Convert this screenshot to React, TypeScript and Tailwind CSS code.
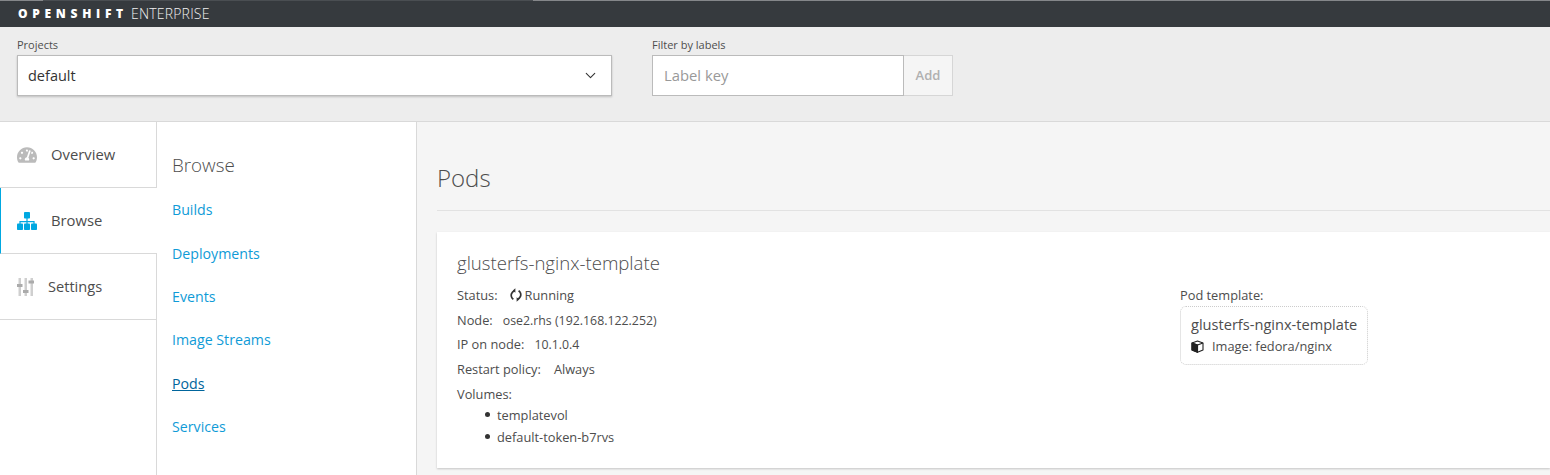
import React from 'react';
import { FaTachometerAlt } from 'react-icons/fa';
import { ChevronDown } from 'lucide-react';

const browseLinks = ['Builds', 'Deployments', 'Events', 'Image Streams', 'Pods', 'Services'];

const SitemapIcon = () => (
    <svg viewBox="0 0 20 18" className="w-[20px] h-[18px] text-[#00a8e1]" fill="currentColor">
        <rect x="7" y="0" width="6" height="6.5" rx="0.8" />
        <path d="M9.4 6h1.2v3H17.6v3.5h-1.2V10.2H10.6v2.3H9.4V10.2H3.6v2.3H2.4V9H9.4z" />
        <rect x="0" y="11.5" width="6" height="6.5" rx="0.8" />
        <rect x="7" y="11.5" width="6" height="6.5" rx="0.8" />
        <rect x="14" y="11.5" width="6" height="6.5" rx="0.8" />
    </svg>
);

const SlidersIcon = () => (
    <svg viewBox="0 0 17 18" className="w-[17px] h-[18px]">
        <g fill="#cfcfcf">
            <rect x="1.5" y="0" width="2.5" height="18" />
            <rect x="7.5" y="0" width="2.5" height="18" />
            <rect x="13.5" y="0" width="2.5" height="18" />
        </g>
        <g fill="#ababab">
            <rect x="0" y="6" width="5.5" height="3" />
            <rect x="6" y="12" width="5.5" height="3" />
            <rect x="11.5" y="2.5" width="5.5" height="3" />
        </g>
    </svg>
);

const SpinnerIcon = () => (
    <svg viewBox="0 0 12 14" className="ml-[12px] mr-[3px] w-[12px] h-[14px] text-[#333]" fill="none" stroke="currentColor">
        <path d="M4.6 2.6C1.6 3.8 .4 7 1.8 9.6c.4.8 1 1.3 1.6 1.7" strokeWidth="1.7" />
        <path d="M7.4 11.4c3-1.2 4.2-4.4 2.8-7-.4-.8-1-1.3-1.6-1.7" strokeWidth="1.7" />
        <path d="M5.4 .2v4.6L2.8 2.6z" fill="currentColor" stroke="none" />
        <path d="M6.6 13.8V9.2l2.6 2.2z" fill="currentColor" stroke="none" />
    </svg>
);

const CubeIcon = () => (
    <svg viewBox="0 0 13 13" className="w-[13px] h-[13px] text-[#222]" fill="none" stroke="currentColor" strokeWidth="1.1" strokeLinejoin="round">
        <path d="M6.5 1L12 3v7l-5.5 2.3L1 10V3z" />
        <path d="M1 3l5.5 2L12 3M6.5 5v7.3" />
        <path d="M1 3l5.5 2v7.3L1 10z" fill="currentColor" />
    </svg>
);

const App: React.FC = () => {
    return (
        <div className="w-[1550px] h-[475px] overflow-hidden flex flex-col bg-[#f5f5f5] text-[#363636] font-['Open_Sans',sans-serif]">
            {/* top bar, with the thin loading strip along its upper edge */}
            <header className="h-[27px] shrink-0 flex flex-col bg-[#363a3e]">
                <div className="h-px flex">
                    <div className="w-[43px] bg-[#85878a]" />
                    <div className="w-[490px] bg-[#4a4e52]" />
                    <div className="flex-1 bg-[#85878a]" />
                </div>
                <div className="flex-1 flex items-center pl-[18px]">
                    <span className="w-[113px] text-[12px] font-extrabold tracking-[4.7px] text-white leading-none">OPENSHIFT</span>
                    <span className="text-[14px] font-light text-[#f0f0f0] leading-none tracking-[0.2px]">ENTERPRISE</span>
                </div>
            </header>

            {/* project and label filters */}
            <div className="h-[95px] shrink-0 flex bg-[#ededed] border-b border-[#d9d9d9] pl-[17px] pt-[10px]">
                <div className="w-[595px]">
                    <label className="block text-[11px] leading-[16px] text-[#4d4d4d] mb-[2px]">Projects</label>
                    <div className="h-[41px] flex items-center justify-between pl-[10px] pr-[12px] bg-white border border-[#bbb] shadow-[0_1px_2px_rgba(0,0,0,0.2)]">
                        <span className="text-[14.5px] text-[#333]">default</span>
                        <ChevronDown className="w-[17px] h-[17px] text-[#333]" strokeWidth={1.5} />
                    </div>
                </div>
                <div className="ml-[40px] w-[301px]">
                    <label className="block text-[11px] leading-[16px] text-[#4d4d4d] mb-[2px]">Filter by labels</label>
                    <div className="flex h-[41px]">
                        <div className="w-[252px] flex items-center pl-[11px] bg-white border border-[#bbb] text-[14.8px] text-[#999]">Label key</div>
                        <div className="w-[49px] flex items-center justify-center bg-[#f5f5f5] border border-l-0 border-[#d6d6d6] text-[13px] font-semibold text-[#b0b0b0]">Add</div>
                    </div>
                </div>
            </div>

            <div className="flex-1 flex min-h-0">
                {/* primary nav */}
                <nav className="w-[157px] shrink-0 bg-white flex flex-col text-[14.8px] text-[#4d4d4d]">
                    <div className="h-[66px] flex items-center pl-[17px] border-r border-b border-[#d9d9d9]">
                        <FaTachometerAlt className="w-[20px] h-[20px] text-[#bbb]" />
                        <span className="ml-[14px]">Overview</span>
                    </div>
                    <div className="h-[66px] flex items-center pl-[16px] border-l border-[#00a8e1] border-b border-b-[#d9d9d9]">
                        <SitemapIcon />
                        <span className="ml-[14px]">Browse</span>
                    </div>
                    <div className="h-[66px] flex items-center pl-[17px] border-r border-b border-[#d9d9d9]">
                        <SlidersIcon />
                        <span className="ml-[14px] text-[14.6px]">Settings</span>
                    </div>
                    <div className="flex-1 border-r border-[#d9d9d9]" />
                </nav>

                {/* secondary nav */}
                <nav className="w-[260px] shrink-0 bg-white border-r border-[#d9d9d9] pl-[15px] pt-[31px]">
                    <h2 className="text-[18.8px] font-light leading-[24px] text-[#4d4d4d] mb-[23.2px]">Browse</h2>
                    <ul className="flex flex-col gap-[23.4px] text-[14.2px] leading-[20px] text-[#0f9bd7]">
                        {browseLinks.map((link) => (
                            <li key={link} className={link === 'Pods' ? 'text-[#00659c] underline' : ''}>{link}</li>
                        ))}
                    </ul>
                </nav>

                {/* main content */}
                <main className="flex-1 min-w-0 pl-[20px] pt-[39px]">
                    <h1 className="text-[24px] font-light leading-[34px] text-[#4d4d4d] pb-[15px] border-b border-[#e2e2e2]">Pods</h1>
                    <section className="mt-[21px] h-[236px] flex bg-white shadow-[0_1px_2px_rgba(0,0,0,0.2)] pl-[20px] pt-[19px] text-[12.8px] text-[#4d4d4d]">
                        <div className="w-[723px]">
                            <h3 className="text-[18.6px] font-light leading-[24px] mb-[11px]">glusterfs-nginx-template</h3>
                            <div className="flex flex-col gap-[6.7px]">
                                <div className="flex items-center h-[18px] leading-[18px]">
                                    <span>Status:</span>
                                    <SpinnerIcon />
                                    <span>Running</span>
                                </div>
                                <div className="h-[18px] leading-[18px]">Node:<span className="ml-[10px] text-[12.35px]">ose2.rhs (192.168.122.252)</span></div>
                                <div className="h-[18px] leading-[18px]">IP on node:<span className="ml-[10px] text-[12.3px]">10.1.0.4</span></div>
                                <div className="h-[18px] leading-[18px]">Restart policy:<span className="ml-[13px]">Always</span></div>
                                <div className="h-[18px] leading-[18px]">Volumes:</div>
                            </div>
                            <ul className="mt-[3.2px] pl-[28px] flex flex-col gap-[4px] leading-[18px]">
                                <li className="flex items-center"><span className="w-[5px] h-[5px] rounded-full bg-[#333] mr-[7px]" />templatevol</li>
                                <li className="flex items-center"><span className="w-[5px] h-[5px] rounded-full bg-[#333] mr-[7px]" />default-token-b7rvs</li>
                            </ul>
                        </div>
                        <div className="pt-[35px]">
                            <div className="leading-[18px] mb-[2px]">Pod template:</div>
                            <div className="w-[188px] h-[59px] rounded-[6px] border border-dotted border-[#ccc] pl-[10px] pt-[7px]">
                                <div className="text-[14.6px] leading-[20px] text-[#4d4d4d] whitespace-nowrap">glusterfs-nginx-template</div>
                                <div className="flex items-center mt-[3px] leading-[18px]">
                                    <CubeIcon />
                                    <span className="ml-[8px]">Image: fedora/nginx</span>
                                </div>
                            </div>
                        </div>
                    </section>
                </main>
            </div>
        </div>
    );
};

export default App;
